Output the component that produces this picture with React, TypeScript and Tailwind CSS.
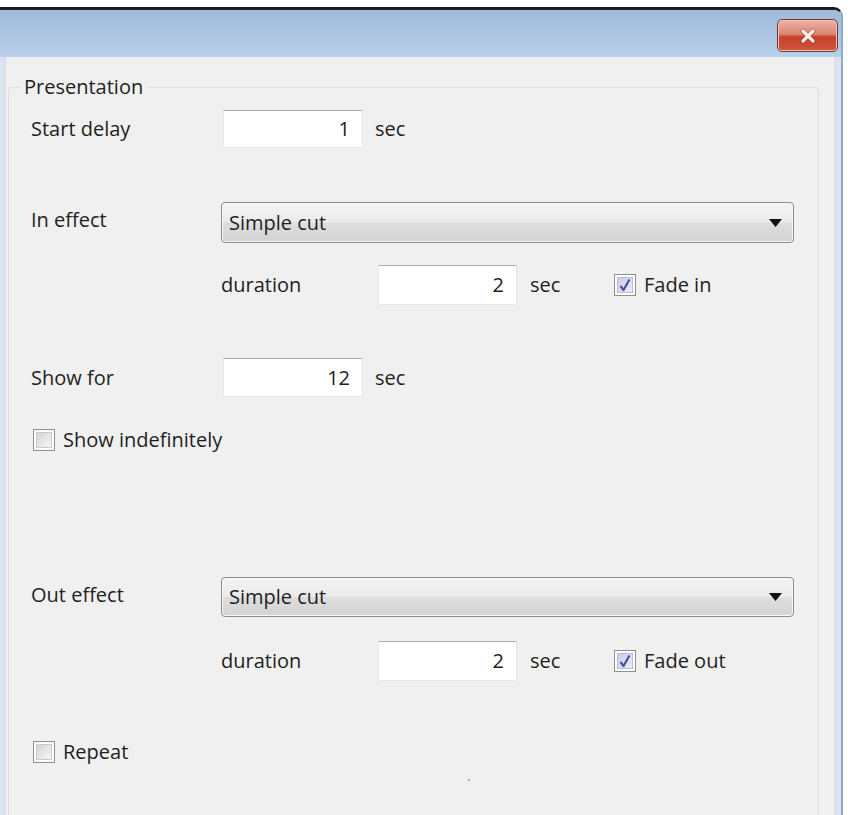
import React from 'react';

const font = { fontFamily: '"Open Sans", "Noto Sans", sans-serif' };

function TextBox({ value, width = 'w-[140px]' }: { value: string; width?: string }) {
  return (
    <div
      className={`${width} h-full bg-white border border-[#e3e9ef] border-t-[#a9adb5] flex items-center justify-end pr-[12px] text-[#1e1e1e]`}
    >
      {value}
    </div>
  );
}

function Combo({ value }: { value: string }) {
  return (
    <div className="w-[573px] h-full rounded-[4px] border border-[#8c8c8c] bg-[linear-gradient(#f4f4f4_0%,#ebebeb_48%,#dddddd_52%,#d4d4d4_100%)] flex items-center justify-between pl-[7px] pr-[11px] shadow-[inset_0_0_0_1px_#f7f7f7]">
      <span className="text-[#1e1e1e]">{value}</span>
      <svg width="13" height="8" viewBox="0 0 13 8">
        <path d="M0 0 H13 L6.5 8 Z" fill="#111" />
      </svg>
    </div>
  );
}

function CheckBox({ checked, label }: { checked?: boolean; label: string }) {
  return (
    <div className="flex items-center gap-[8px]">
      <div className="w-[22px] h-[22px] border border-[#8e8f8f] bg-white p-[2px]">
        <div
          className={`w-full h-full border ${
            checked
              ? 'border-[#b9bcd8] bg-[linear-gradient(135deg,#c9cbe6,#eeeefa)]'
              : 'border-[#c9c9c9] bg-[linear-gradient(135deg,#d6d6d6,#f5f5f5)]'
          } flex items-center justify-center`}
        >
          {checked && (
            <svg width="12" height="14" viewBox="0 0 12 14">
              <path d="M1.5 8 L4.5 12 L10.5 1.5" fill="none" stroke="#4b4f9c" strokeWidth="2.2" strokeLinejoin="round" />
            </svg>
          )}
        </div>
      </div>
      <span className="text-[#1e1e1e]">{label}</span>
    </div>
  );
}

function DurationRow({ value, label, checked, className }: { value: string; label: string; checked?: boolean; className: string }) {
  return (
    <div className={`flex items-center ${className}`}>
      <span className="w-[157px] pl-[190px] box-content">duration</span>
      <TextBox value={value} width="w-[139px]" />
      <span className="w-[97px] pl-[13px] box-border">sec</span>
      <CheckBox checked={checked} label={label} />
    </div>
  );
}

export default function App() {
  return (
    <div className="w-[848px] h-[815px] bg-white pt-[7px] overflow-hidden text-[20px] leading-none text-[#1e1e1e]" style={font}>
      <div className="w-[843px] h-[820px] flex flex-col rounded-tr-[9px] border-t-[3px] border-t-[#1c1c1c] border-r-[2px] border-r-[#8fa9c8] bg-[#d9e4f0] overflow-hidden">
        {/* title bar */}
        <div className="h-[47px] shrink-0 bg-[linear-gradient(#9fbadb,#b9d0ea)] flex items-start justify-end pt-[9px] pr-[3px]">
          <div className="w-[61px] h-[33px] rounded-[5px] border border-[#6e3a34] bg-[linear-gradient(#eeb1a4_0%,#dc8877_45%,#c6412c_55%,#d0573c_100%)] shadow-[inset_0_0_0_1px_#f2c2b6] flex items-center justify-center">
            <svg width="18" height="16" viewBox="0 0 18 16">
              <path d="M4 3 L14 13 M14 3 L4 13" stroke="#7a2a22" strokeWidth="5" strokeLinecap="round" opacity="0.45" />
              <path d="M4 3 L14 13 M14 3 L4 13" stroke="#fbeeea" strokeWidth="3.2" strokeLinecap="round" />
            </svg>
          </div>
        </div>

        {/* dialog body */}
        <div className="flex-1 ml-[5px] mr-[6px] bg-[#f0f0f0] border-l border-r border-[#dadada] pt-[18px]">
          <fieldset className="ml-[2px] w-[811px] h-[900px] border border-[#dcdfe3] rounded-[3px]">
            <legend className="ml-[11px] px-[4px] leading-[24px]">Presentation</legend>

            <div className="flex flex-col pl-[22px]">
              <div className="flex items-center h-[38px] mt-[11px]">
                <span className="w-[192px]">Start delay</span>
                <TextBox value="1" />
                <span className="ml-[12px]">sec</span>
              </div>

              <div className="flex items-center h-[41px] mt-[54px]">
                <span className="w-[190px] self-start pt-[8px]">In effect</span>
                <Combo value="Simple cut" />
              </div>

              <DurationRow value="2" label="Fade in" checked className="h-[40px] mt-[22px]" />

              <div className="flex items-center h-[39px] mt-[53px]">
                <span className="w-[192px]">Show for</span>
                <TextBox value="12" />
                <span className="ml-[12px]">sec</span>
              </div>

              <div className="h-[24px] mt-[31px] ml-[2px] flex items-center">
                <CheckBox label="Show indefinitely" />
              </div>

              <div className="flex items-center h-[40px] mt-[125px]">
                <span className="w-[190px] self-start pt-[8px]">Out effect</span>
                <Combo value="Simple cut" />
              </div>

              <DurationRow value="2" label="Fade out" checked className="h-[40px] mt-[24px]" />

              <div className="h-[23px] mt-[59px] ml-[2px] flex items-center">
                <CheckBox label="Repeat" />
              </div>

              <div className="mt-[16px] ml-[437px] w-[2px] h-[2px] bg-[#9a9a9a] rounded-full" />
            </div>
          </fieldset>
        </div>
      </div>
    </div>
  );
}
